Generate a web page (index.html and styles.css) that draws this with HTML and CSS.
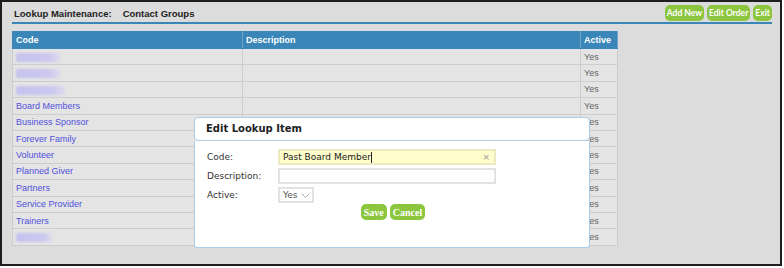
FILE: index.html
```html
<!DOCTYPE html>
<html lang="en">
<head>
    <meta charset="UTF-8">
    <title>Lookup Maintenance</title>
    <link rel="stylesheet" href="styles.css">
</head>
<body>
    <div class="frame">
        <div class="page-head">
            <h1>Lookup Maintenance:<span class="sub">Contact Groups</span></h1>
            <div class="actions">
                <button class="btn">Add New</button>
                <button class="btn">Edit Order</button>
                <button class="btn">Exit</button>
            </div>
        </div>

        <table class="grid">
            <thead>
                <tr><th class="c-code">Code</th><th class="c-desc">Description</th><th class="c-active">Active</th></tr>
            </thead>
            <tbody>
                <tr><td><span class="blur" style="width:44px"></span></td><td></td><td>Yes</td></tr>
                <tr><td><span class="blur" style="width:44px"></span></td><td></td><td>Yes</td></tr>
                <tr><td><span class="blur" style="width:49px"></span></td><td></td><td>Yes</td></tr>
                <tr><td><a href="#">Board Members</a></td><td></td><td>Yes</td></tr>
                <tr><td><a href="#">Business Sponsor</a></td><td></td><td>Yes</td></tr>
                <tr><td><a href="#">Forever Family</a></td><td></td><td>Yes</td></tr>
                <tr><td><a href="#">Volunteer</a></td><td></td><td>Yes</td></tr>
                <tr><td><a href="#">Planned Giver</a></td><td></td><td>Yes</td></tr>
                <tr><td><a href="#">Partners</a></td><td></td><td>Yes</td></tr>
                <tr><td><a href="#">Service Provider</a></td><td></td><td>Yes</td></tr>
                <tr><td><a href="#">Trainers</a></td><td></td><td>Yes</td></tr>
                <tr><td><span class="blur" style="width:36px"></span></td><td></td><td>Yes</td></tr>
            </tbody>
        </table>

        <div class="dialog">
            <div class="dialog-title">Edit Lookup Item</div>
            <div class="dialog-body">
                <div class="field">
                    <label>Code:</label>
                    <div class="input filled">Past Board Member<span class="caret"></span><span class="clear">×</span></div>
                </div>
                <div class="field">
                    <label>Description:</label>
                    <div class="input"></div>
                </div>
                <div class="field">
                    <label>Active:</label>
                    <div class="select">Yes
                        <svg width="9" height="5" viewBox="0 0 9 5"><path d="M0.5 0.5 L4.5 4.5 L8.5 0.5" fill="none" stroke="#aaa" stroke-width="1"/></svg>
                    </div>
                </div>
                <div class="dialog-actions">
                    <button class="btn serif">Save</button>
                    <button class="btn serif">Cancel</button>
                </div>
            </div>
        </div>
    </div>
</body>
</html>
```

FILE: styles.css
```css
body {
    margin: 0;
    background: #fff;
}
.frame {
    position: relative;
    width: 778px;
    height: 262px;
    border: 2px solid #1e1e1e;
    background: #dcdcdc;
    font-family: "Liberation Sans", Arial, sans-serif;
}
.page-head {
    display: flex;
    justify-content: space-between;
    align-items: center;
    margin: 0 8px 0 10px;
    padding: 3px 0 1px 0;
    border-bottom: 2px solid #3a86b8;
}
.page-head h1 {
    margin: 0 0 0 2px;
    font-size: 9.5px;
    font-weight: bold;
    color: #222;
}
.page-head .sub {
    margin-left: 11px;
}
.actions {
    display: flex;
    gap: 3px;
}
.btn {
    border: none;
    background: #8cc63e;
    color: #fff;
    font-family: Lato, sans-serif;
    font-weight: bold;
    font-size: 8.5px;
    height: 16px;
    padding: 0 2px;
    border-radius: 5px;
}
.grid {
    margin: 7px 0 0 10px;
    width: 606px;
    border-collapse: collapse;
    font-size: 9px;
}
.grid th {
    background: #3a86b8;
    color: #fff;
    text-align: left;
    height: 16px;
    padding: 0 3px;
    border: 1px solid #3a86b8;
    border-right-color: #6aa6cc;
}
.c-code { width: 223px; }
.c-desc { width: 331px; }
.grid td {
    background: #e4e4e4;
    border: 1px solid #cdcdcd;
    height: 15.4px;
    padding: 0 3px;
    color: #666;
}
.grid a {
    color: #5050e0;
    text-decoration: none;
}
.blur {
    display: inline-block;
    height: 9px;
    vertical-align: middle;
    background: linear-gradient(90deg, #c6c2ee, #ccc8f0 75%, #dedcea);
    border-radius: 2px;
    filter: blur(1px);
}
.dialog {
    position: absolute;
    left: 192px;
    top: 115px;
    width: 396px;
    font-family: "DejaVu Sans", Verdana, sans-serif;
}
.dialog-title {
    height: 22px;
    line-height: 22px;
    padding-left: 11px;
    background: #fff;
    border: 1px solid #a9cbe6;
    border-radius: 4px;
    font-size: 10px;
    font-weight: bold;
    color: #222;
}
.dialog-body {
    height: 107px;
    background: #fff;
    border: 1px solid #a9cbe6;
    border-top: none;
    border-radius: 0 0 3px 3px;
    padding: 8px 0 0 12px;
    box-sizing: border-box;
    font-size: 9px;
    color: #333;
}
.field {
    display: flex;
    align-items: center;
    margin-bottom: 3px;
}
.field label {
    width: 71px;
}
.input {
    position: relative;
    width: 211px;
    height: 12px;
    line-height: 12px;
    border: 2px solid #e2e2e2;
    padding-left: 3px;
    color: #222;
}
.input.filled {
    background: #fffdcb;
    border-color: #eeeac0;
}
.caret {
    display: inline-block;
    width: 1px;
    height: 11px;
    background: #222;
    vertical-align: middle;
}
.clear {
    position: absolute;
    right: 4px;
    top: 0;
    color: #999;
    font-size: 9px;
}
.select {
    display: flex;
    align-items: center;
    gap: 3px;
    height: 12px;
    border: 2px solid #e2e2e2;
    padding: 0 2px 0 3px;
    color: #555;
}
.dialog-actions {
    display: flex;
    justify-content: center;
    gap: 3px;
    width: 396px;
    margin: -2px 0 0 -12px;
}
.btn.serif {
    font-family: "Liberation Serif", serif;
    font-size: 10px;
    height: 16px;
    padding: 0 3px;
}
```
